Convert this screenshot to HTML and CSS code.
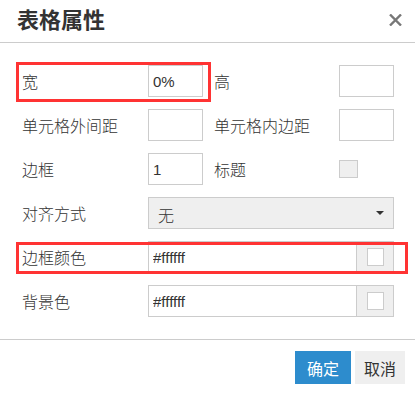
FILE: index.html
```html
<html lang="zh-cn">
<head>
  <meta charset="utf-8">
  <meta name="viewport" content="width=device-width, initial-scale=1.0">
  <title>表格属性</title>
  <link rel="stylesheet" href="styles.css">
</head>
<body>
  <div class="dialog">
    <div class="dialog-header">
      <h1>表格属性</h1>
      <a class="dialog-close" href="">
        <svg width="13" height="12" viewBox="0 0 13 12">
          <path d="M1 0.5 L12 11.5 M12 0.5 L1 11.5" stroke="#777" stroke-width="2.4" fill="none"/>
        </svg>
      </a>
    </div>
    <div class="dialog-body">
      <label>宽</label>
      <input class="field" type="text" value="0%">
      <label class="second">高</label>
      <input class="field" type="text">

      <label>单元格外间距</label>
      <input class="field" type="text">
      <label class="second">单元格内边距</label>
      <input class="field" type="text">

      <label>边框</label>
      <input class="field" type="text" value="1">
      <label class="second">标题</label>
      <span class="check"></span>

      <label>对齐方式</label>
      <div class="select wide">
        <span>无</span>
        <i class="caret"></i>
      </div>

      <label>边框颜色</label>
      <div class="color wide">
        <input type="text" value="#ffffff">
        <span class="swatch"><i></i></span>
      </div>

      <label>背景色</label>
      <div class="color wide">
        <input type="text" value="#ffffff">
        <span class="swatch"><i></i></span>
      </div>

      <!-- 标注框 -->
      <div class="mark mark-width"></div>
      <div class="mark mark-border"></div>
    </div>
    <div class="dialog-footer">
      <button class="btn btn-primary">确定</button>
      <button class="btn">取消</button>
    </div>
  </div>
</body>
</html>
```

FILE: styles.css
```css
:root {
  --line-color: #ccc;
  --text-color: #333;
  --muted-bg: #efefef;
  --primary: #2d8ccd;
  --mark: #ff3333;
}
body {
  margin: 0;
  background-color: #fff;
  color: var(--text-color);
  font-family: "Liberation Sans", "Noto Sans CJK SC", sans-serif;
}
a, a:link, a:visited {
  color: inherit;
  text-decoration: none;
}
.dialog {
  width: 415px;
}
.dialog-header {
  height: 42px;
  border-bottom: 1px solid var(--line-color);
  padding: 0 13px 0 17px;
  display: flex;
  align-items: center;
  justify-content: space-between;
}
.dialog-header h1 {
  margin: 0;
  font-size: 22px;
  font-weight: bold;
  line-height: 42px;
}
.dialog-close {
  display: flex;
  margin-top: -2px;
}
.dialog-body {
  position: relative;
  padding: 22px 21px 22px 22px;
  display: grid;
  grid-template-columns: 126px 55px 1fr 55px;
  grid-auto-rows: 32px;
  row-gap: 12px;
  align-items: center;
  font-size: 16px;
  font-weight: 300;
}
.dialog-body label {
  /* 中文字形偏上，往下挪一点 */
  padding-top: 4px;
  line-height: 28px;
}
.dialog-body label.second {
  padding-left: 11px;
}
.field {
  box-sizing: border-box;
  width: 55px;
  height: 32px;
  border: 1px solid var(--line-color);
  border-radius: 0;
  outline: none;
  padding: 0 4px;
  font: 15px "Liberation Sans", sans-serif;
  color: var(--text-color);
  background-color: #fff;
}
.check {
  box-sizing: border-box;
  width: 19px;
  height: 18px;
  border: 1px solid var(--line-color);
  background-color: var(--muted-bg);
}
.wide {
  grid-column: 2 / 5;
  box-sizing: border-box;
  height: 32px;
  border: 1px solid var(--line-color);
}
.select {
  background-color: var(--muted-bg);
  display: flex;
  align-items: center;
  justify-content: space-between;
  padding: 3px 9px 0 9px;
  font-size: 16px;
}
.caret {
  width: 0;
  height: 0;
  margin-top: -3px;
  border-left: 4px solid transparent;
  border-right: 4px solid transparent;
  border-top: 4px solid #333;
}
.color {
  display: flex;
  background-color: #fff;
}
.color input {
  flex: 1;
  min-width: 0;
  border: none;
  outline: none;
  padding: 0 4px;
  font: 15px "Liberation Sans", sans-serif;
  color: var(--text-color);
  background-color: transparent;
}
.swatch {
  width: 36px;
  border-left: 1px solid var(--line-color);
  background-color: var(--muted-bg);
  display: flex;
  align-items: center;
  justify-content: center;
}
.swatch i {
  box-sizing: border-box;
  width: 17px;
  height: 18px;
  border: 1px solid var(--line-color);
  background-color: #fff;
}
.mark {
  position: absolute;
  border: 3px solid var(--mark);
  pointer-events: none;
}
.mark-width {
  left: 16px;
  top: 19px;
  width: 189px;
  height: 34px;
}
.mark-border {
  left: 16px;
  top: 199px;
  width: 386px;
  height: 26px;
}
.dialog-footer {
  border-top: 1px solid var(--line-color);
  padding: 11px 10px 0 0;
  display: flex;
  justify-content: flex-end;
  gap: 4px;
}
.btn {
  height: 33px;
  border: none;
  border-radius: 0;
  outline: none;
  padding: 0 9px;
  font: 16px "Liberation Sans", "Noto Sans CJK SC", sans-serif;
  color: var(--text-color);
  background-color: var(--muted-bg);
  cursor: pointer;
}
.btn-primary {
  padding: 0 12px;
  color: #fff;
  background-color: var(--primary);
}
```
